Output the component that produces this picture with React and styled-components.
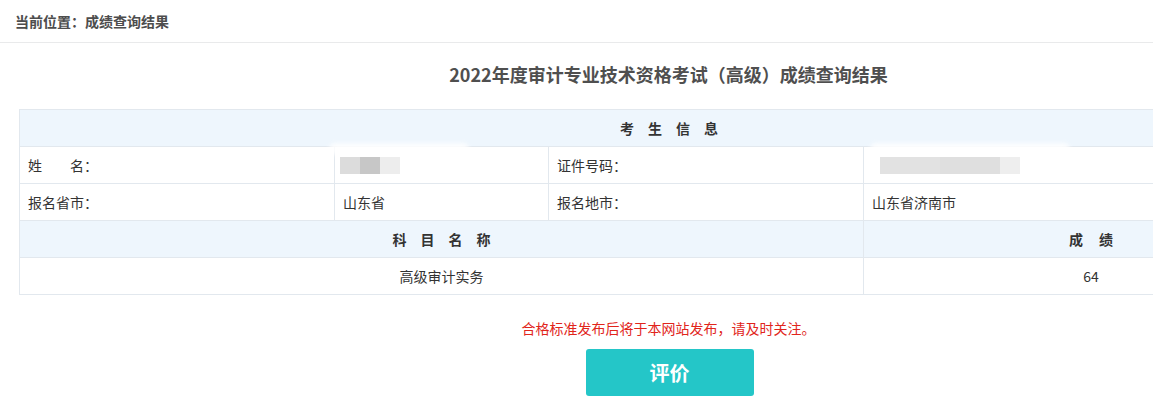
import React from "react";
import styled, { createGlobalStyle } from "styled-components";

const Global = createGlobalStyle`
  html, body {
    margin: 0;
    padding: 0;
    overflow: hidden;
    background: #ffffff;
  }
  body {
    font-family: "Noto Sans CJK SC", "Noto Sans", "Liberation Sans", sans-serif;
    color: #333;
  }
`;

const Crumb = styled.div`
  height: 42px;
  line-height: 42px;
  padding-left: 15px;
  font-size: 14px;
  font-weight: 700;
  color: #4d4d4d;
  border-bottom: 1px solid #e9eaeb;
  white-space: nowrap;
`;

const Page = styled.div`
  width: 1337px;
  box-sizing: border-box;
  padding: 0 19px;
`;

const Title = styled.h1`
  margin: 19px 0 0;
  height: 24px;
  line-height: 24px;
  font-size: 18px;
  font-weight: 700;
  color: #4f4f4f;
  text-align: center;
  white-space: nowrap;
`;

const Table = styled.table`
  margin-top: 23px;
  width: 1299px;
  table-layout: fixed;
  border-collapse: collapse;
  font-size: 14px;
  color: #333;
`;

const Cell = styled.td`
  position: relative;
  height: 36px;
  padding: 0 8px;
  border: 1px solid #e2e8ee;
  text-align: ${(p) => p.$align || "left"};
  background: ${(p) => (p.$head ? "#eef6fd" : "#ffffff")};
  font-weight: ${(p) => (p.$head ? 700 : 400)};
  letter-spacing: ${(p) => p.$spacing || "0"};
  text-indent: ${(p) => p.$spacing || "0"};
  white-space: nowrap;
  vertical-align: middle;
  line-height: 20px;
`;

const Blots = styled.div`
  display: flex;
  height: 17px;
  margin-left: ${(p) => p.$offset};
  filter: blur(0.6px);
`;

const Blot = styled.span`
  display: block;
  width: ${(p) => p.$w}px;
  height: 100%;
  background: ${(p) => p.$c};
`;

const Smear = styled.span`
  position: absolute;
  top: -4px;
  left: ${(p) => p.$left}px;
  width: ${(p) => p.$w}px;
  height: 12px;
  border-radius: 8px;
  background: #ffffff;
  filter: blur(2px);
  opacity: 0.85;
`;

const Notice = styled.p`
  margin: 23px 0 0;
  height: 20px;
  line-height: 20px;
  font-size: 14px;
  color: #e1251b;
  text-align: center;
  white-space: nowrap;
`;

const ButtonRow = styled.div`
  display: flex;
  justify-content: center;
  margin-top: 11px;
  padding-left: 2px;
`;

const Rate = styled.button`
  width: 168px;
  height: 47px;
  border: none;
  border-radius: 3px;
  background: #24c6c8;
  color: #ffffff;
  font-family: "Noto Sans CJK SC", sans-serif;
  font-size: 20px;
  font-weight: 700;
  cursor: pointer;
`;

export default function App() {
  return (
    <>
      <Global />
      <Crumb>当前位置：成绩查询结果</Crumb>
      <Page>
        <Title>2022年度审计专业技术资格考试（高级）成绩查询结果</Title>
        <Table>
          <colgroup>
            <col style={{ width: 315 }} />
            <col style={{ width: 214 }} />
            <col style={{ width: 315 }} />
            <col style={{ width: 455 }} />
          </colgroup>
          <tbody>
            <tr>
              <Cell colSpan={4} $head $align="center" $spacing="14px">
                考生信息
              </Cell>
            </tr>
            <tr>
              <Cell>姓　　名：</Cell>
              <Cell>
                <Smear $left={-6} $w={140} />
                <Blots $offset="-3px">
                  <Blot $w={20} $c="#dcdcdc" />
                  <Blot $w={20} $c="#c7c7c7" />
                  <Blot $w={20} $c="#ededed" />
                </Blots>
              </Cell>
              <Cell>证件号码：</Cell>
              <Cell>
                <Smear $left={6} $w={200} />
                <Blots $offset="8px">
                  <Blot $w={60} $c="#e2e2e2" />
                  <Blot $w={60} $c="#dfdfdf" />
                  <Blot $w={20} $c="#eeeeee" />
                </Blots>
              </Cell>
            </tr>
            <tr>
              <Cell>报名省市：</Cell>
              <Cell>山东省</Cell>
              <Cell>报名地市：</Cell>
              <Cell>山东省济南市</Cell>
            </tr>
            <tr>
              <Cell colSpan={3} $head $align="center" $spacing="14px">
                科目名称
              </Cell>
              <Cell $head $align="center" $spacing="16px">
                成绩
              </Cell>
            </tr>
            <tr>
              <Cell colSpan={3} $align="center">
                高级审计实务
              </Cell>
              <Cell $align="center">64</Cell>
            </tr>
          </tbody>
        </Table>
        <Notice>合格标准发布后将于本网站发布，请及时关注。</Notice>
        <ButtonRow>
          <Rate>评价</Rate>
        </ButtonRow>
      </Page>
    </>
  );
}
